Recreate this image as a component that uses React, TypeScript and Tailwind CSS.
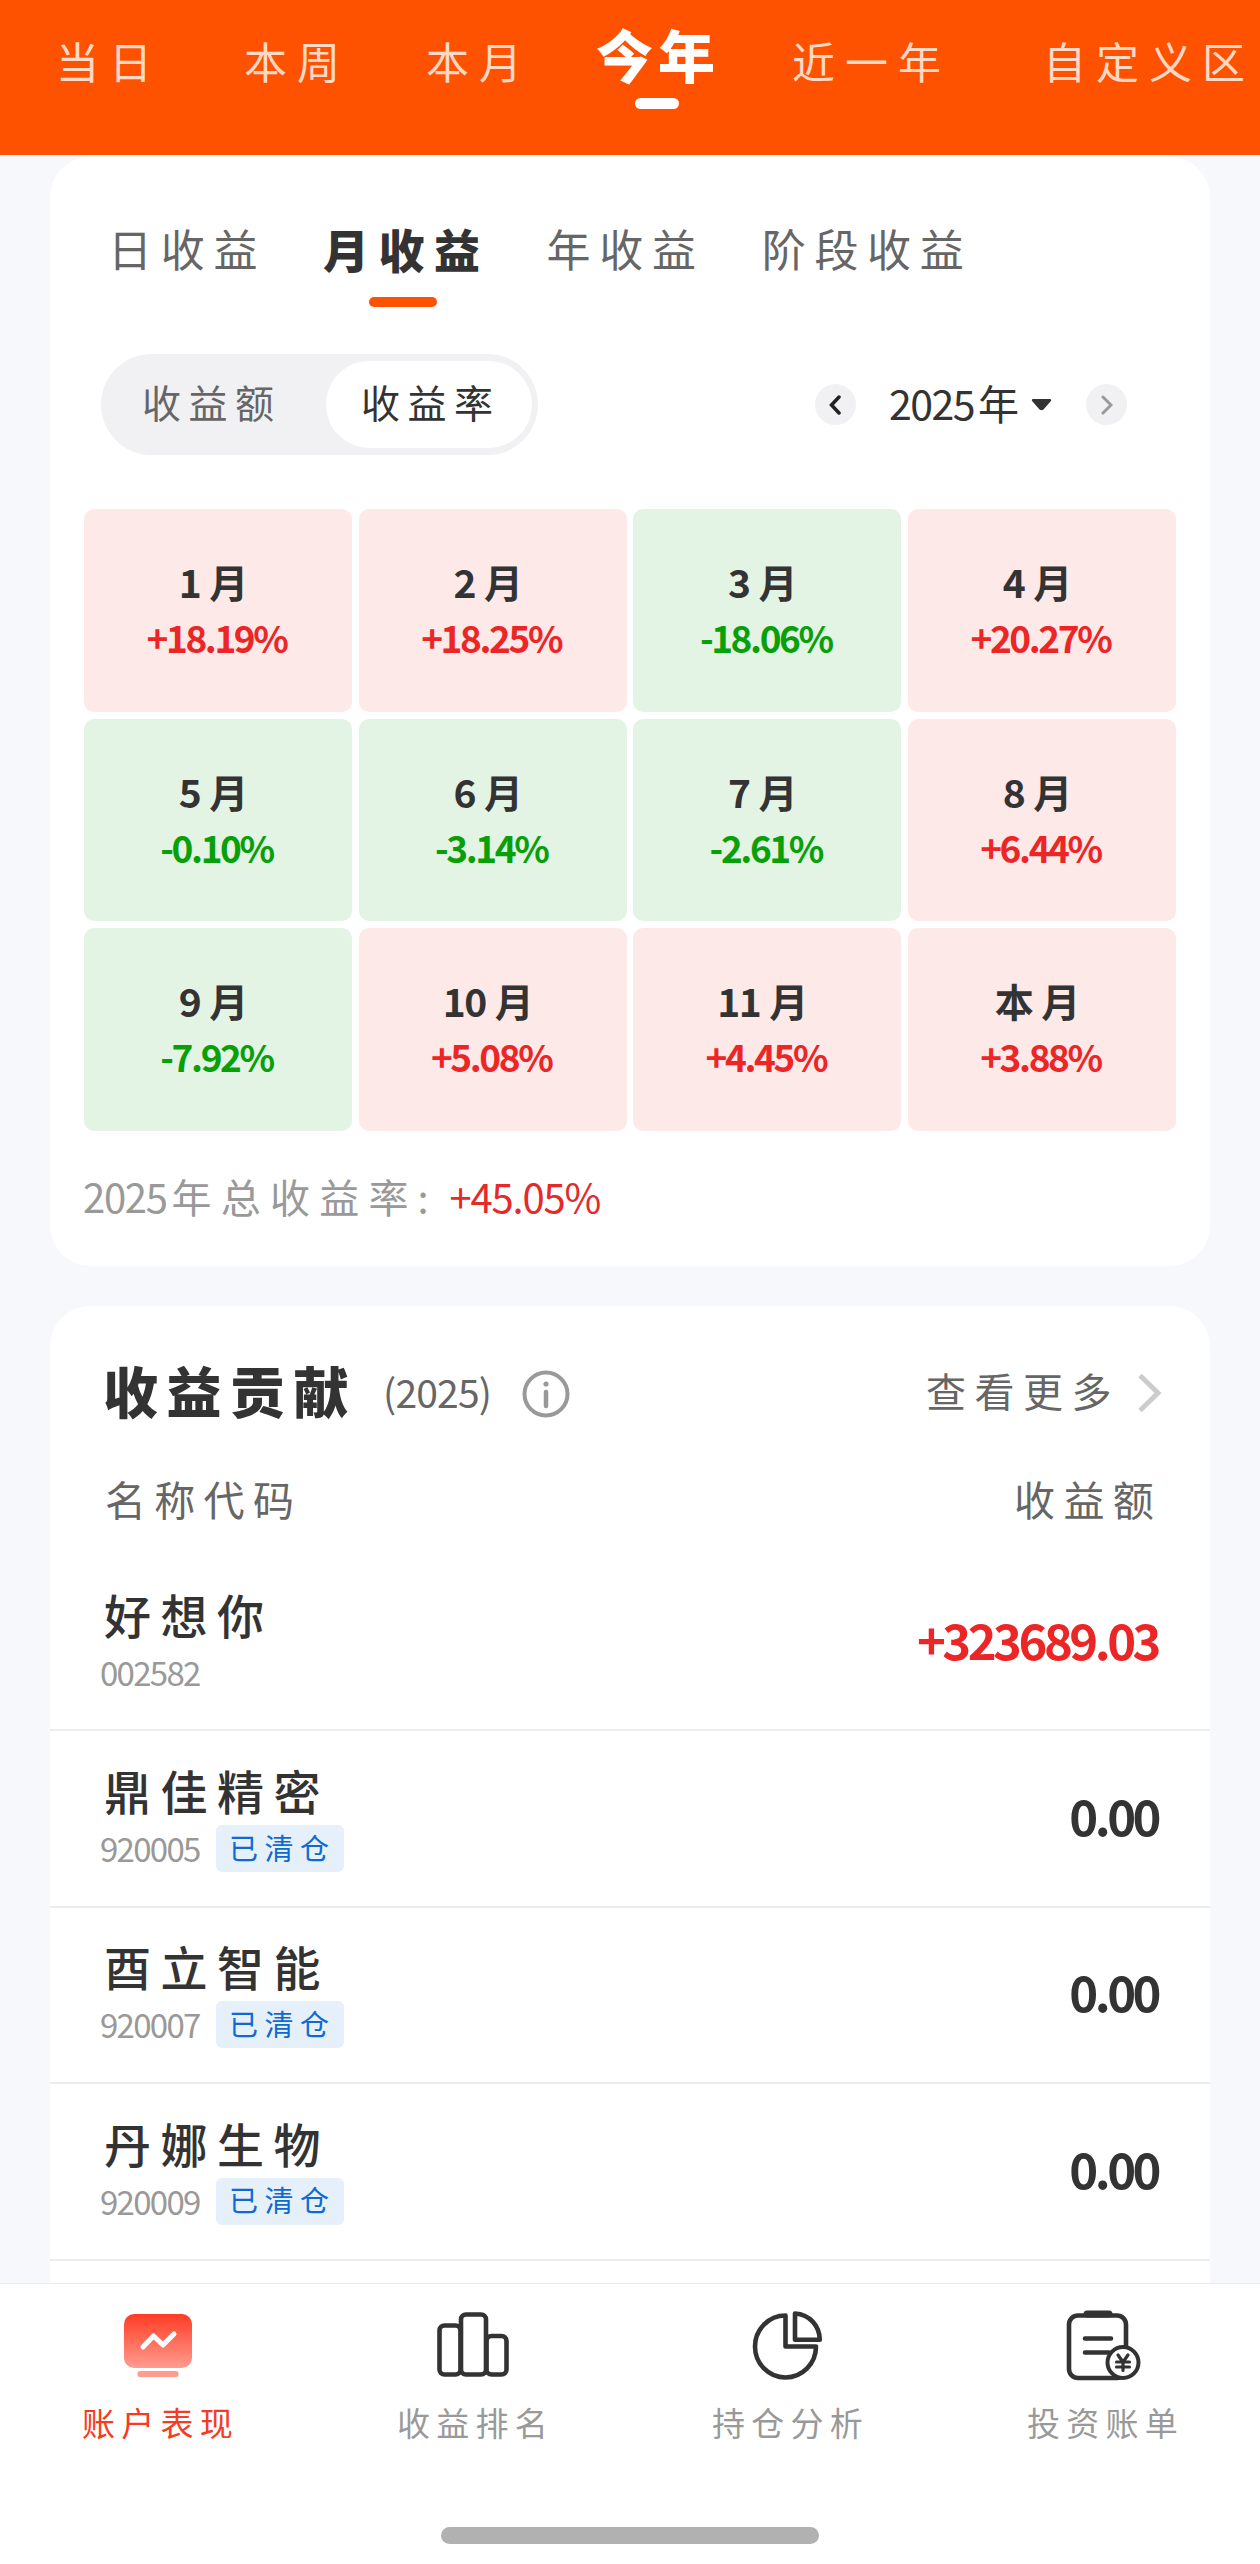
import { useState, type ReactNode } from "react";

type Holding = {
  name: string;
  code: string;
  amount: string;
  cleared?: boolean;
};

const ranges = [
  { label: "当日", className: "ml-[56px]" },
  { label: "本周", className: "ml-[82px]" },
  { label: "本月", className: "ml-[76px]" },
  { label: "今年", className: "ml-[64px]" },
  { label: "近一年", className: "ml-[72px]" },
  { label: "自定义区", className: "ml-[92px]" },
];

const periods = [
  { label: "日收益", className: "ml-[58px]" },
  { label: "月收益", className: "ml-[57px]" },
  { label: "年收益", className: "ml-[57px]" },
  { label: "阶段收益", className: "ml-[57px]" },
];

const months = [
  { label: "1", value: "+18.19%" },
  { label: "2", value: "+18.25%" },
  { label: "3", value: "-18.06%" },
  { label: "4", value: "+20.27%" },
  { label: "5", value: "-0.10%" },
  { label: "6", value: "-3.14%" },
  { label: "7", value: "-2.61%" },
  { label: "8", value: "+6.44%" },
  { label: "9", value: "-7.92%" },
  { label: "10", value: "+5.08%" },
  { label: "11", value: "+4.45%" },
  { label: "本", value: "+3.88%" },
];

const holdings: Holding[] = [
  { name: "好想你", code: "002582", amount: "+323689.03" },
  { name: "鼎佳精密", code: "920005", amount: "0.00", cleared: true },
  { name: "酉立智能", code: "920007", amount: "0.00", cleared: true },
  { name: "丹娜生物", code: "920009", amount: "0.00", cleared: true },
];

const App = () => {
  const [range, setRange] = useState("今年");
  const [period, setPeriod] = useState("月收益");

  return (
    <div className="flex h-[2564px] w-[1260px] flex-col overflow-hidden bg-[#f6f8fb] font-['Noto_Sans_CJK_SC',sans-serif] text-[#333]">
      <header className="h-[155px] shrink-0 overflow-hidden bg-[#ff5200]">
        <nav className="flex h-[120px] w-max items-center">
          {ranges.map((r) => (
            <RangeTab
              key={r.label}
              label={r.label}
              className={r.className}
              active={r.label === range}
              onClick={() => setRange(r.label)}
            />
          ))}
        </nav>
      </header>

      <main className="flex min-h-0 flex-1 flex-col overflow-hidden px-[50px] pt-[2px]">
        <section className="h-[1109px] shrink-0 rounded-[40px] bg-white">
          <div className="flex h-[197px] items-start pt-[66px]">
            {periods.map((p) => (
              <PeriodTab
                key={p.label}
                label={p.label}
                className={p.className}
                active={p.label === period}
                onClick={() => setPeriod(p.label)}
              />
            ))}
          </div>

          <div className="flex h-[101px] items-center justify-between pr-[83px] pl-[51px]">
            <div className="flex h-full w-[437px] items-center rounded-full bg-[#f1f1f4] pr-[6px] text-[39px] leading-none tracking-[7.5px]">
              <button className="w-[225px] pb-[6px] pl-[41px] text-left text-[#666]">
                收益额
              </button>
              <button className="h-[87px] flex-1 rounded-full bg-white pb-[6px] pl-[35px] text-left">
                收益率
              </button>
            </div>
            <YearPicker />
          </div>

          <div className="mt-[54px] grid grid-cols-4 gap-x-[6.6px] gap-y-[7px] px-[34px]">
            {months.map((m) => (
              <MonthCell key={m.label} label={m.label} value={m.value} />
            ))}
          </div>

          <div className="flex h-[131px] items-center pl-[33px] text-[40px] leading-none text-[#999]">
            <span className="tracking-[-1.3px]">2025</span>
            <span className="ml-[5px] w-[278px] tracking-[9.2px]">
              年总收益率:
            </span>
            <span className="tracking-[-1.2px] text-[#e52a2a]">+45.05%</span>
          </div>
        </section>

        <section className="mt-[40px] h-[1100px] shrink-0 rounded-t-[40px] bg-white">
          <div className="flex h-[170px] items-center pr-[48px] pl-[53px] leading-none">
            <h2 className="pb-[3px] text-[55px] font-black tracking-[8.5px]">
              收益贡献
            </h2>
            <span className="ml-[26px] text-[39px] tracking-[-0.8px] text-[#666]">
              (2025)
            </span>
            <InfoIcon />
            <a className="ml-auto flex items-center text-[40px] tracking-[8.5px] text-[#666]">
              <span className="pb-[2px]">查看更多</span>
              <svg
                className="mt-[4px] ml-[18px] h-[40px] w-[24px]"
                viewBox="0 0 24 40"
                fill="none"
                stroke="#ccc"
                strokeWidth="5"
              >
                <path d="M2 2.5 20 20 2 37.5" />
              </svg>
            </a>
          </div>

          <div className="flex h-[45px] items-center justify-between pr-[48px] pl-[55px] text-[41px] leading-none tracking-[8.3px] text-[#666]">
            <span>名称代码</span>
            <span>收益额</span>
          </div>

          <ul className="pt-[34px]">
            {holdings.map((h) => (
              <HoldingRow key={h.code} holding={h} />
            ))}
          </ul>
        </section>
      </main>

      <footer className="flex h-[281px] shrink-0 flex-col items-center border-t border-[#e8ecef] bg-white">
        <div className="grid w-full grid-cols-4 pt-[24px]">
          <NavItem label="账户表现" icon={<AccountIcon />} active />
          <NavItem label="收益排名" icon={<RankIcon />} />
          <NavItem label="持仓分析" icon={<PieIcon />} />
          <NavItem label="投资账单" icon={<BillIcon />} />
        </div>
        <div className="mt-auto mb-[20px] h-[17px] w-[378px] rounded-full bg-[#b1b1b1]" />
      </footer>
    </div>
  );
};

type TabProps = {
  label: string;
  className: string;
  active: boolean;
  onClick: () => void;
};

const RangeTab = ({ label, className, active, onClick }: TabProps) => (
  <button
    className={`relative leading-none whitespace-nowrap ${className} ${
      active
        ? "pb-[14px] text-[57px] font-black tracking-[5px] text-white"
        : "text-[43px] tracking-[10px] text-[#ffd9c6]"
    }`}
    onClick={onClick}
  >
    {label}
    {active && (
      <span className="absolute -bottom-[13px] left-[39px] h-[11px] w-[44px] rounded-full bg-white" />
    )}
  </button>
);

const PeriodTab = ({ label, className, active, onClick }: TabProps) => (
  <button
    className={`flex flex-col items-center leading-[50px] ${className} ${
      active
        ? "text-[46px] font-black tracking-[9.5px]"
        : "text-[44px] tracking-[8.7px] text-[#666]"
    }`}
    onClick={onClick}
  >
    {label}
    {active && (
      <span className="mt-[24px] mr-[6px] h-[10px] w-[68px] rounded-full bg-[#ff5200]" />
    )}
  </button>
);

const YearPicker = () => (
  <div className="flex items-center">
    <button className="flex size-[41px] items-center justify-center rounded-full bg-[#f1f1f4]">
      <svg
        className="h-[20px] w-[12px]"
        viewBox="0 0 12 20"
        fill="none"
        stroke="#222"
        strokeWidth="3.5"
        strokeLinecap="round"
      >
        <path d="M10 2 2.5 10 10 18" />
      </svg>
    </button>
    <button className="ml-[33px] flex items-center pb-[4px] text-[41px] leading-none">
      <span className="tracking-[-1.5px]">2025</span>
      <span className="ml-[4px]">年</span>
      <svg className="mt-[5px] ml-[12px] h-[12px] w-[21px]" viewBox="0 0 20 12">
        <path d="M1 0h18q1.5 1 0 2.5L12 10.5q-2 1.5-4 0L1 2.5Q-.5 1 1 0z" fill="#333" />
      </svg>
    </button>
    <button className="ml-[34px] flex size-[41px] items-center justify-center rounded-full bg-[#f1f1f4]">
      <svg
        className="h-[20px] w-[12px]"
        viewBox="0 0 12 20"
        fill="none"
        stroke="#999"
        strokeWidth="3"
        strokeLinecap="round"
      >
        <path d="M2 2 10 10 2 18" />
      </svg>
    </button>
  </div>
);

const MonthCell = ({ label, value }: { label: string; value: string }) => {
  const up = value.startsWith("+");

  return (
    <div
      className={`flex h-[202.6px] flex-col items-center gap-[18px] rounded-[10px] pt-[53px] font-bold ${
        up ? "bg-[#fde9e8]" : "bg-[#e3f4e5]"
      }`}
    >
      <div className="mr-[9px] flex items-center gap-[9px] text-[39px] leading-none">
        <span className="tracking-[-1.5px]">{label}</span>
        <span>月</span>
      </div>
      <div
        className={`mr-[3px] text-[37px] leading-none tracking-[-2.4px] ${
          up ? "text-[#ec2626]" : "text-[#089f08]"
        }`}
      >
        {value}
      </div>
    </div>
  );
};

const HoldingRow = ({ holding }: { holding: Holding }) => (
  <li className="flex h-[176.4px] items-center justify-between border-b-2 border-[#ededed] pr-[52px] pl-[50px]">
    <div>
      <div className="h-[59px] pl-[4px] text-[47px] leading-[50px] font-medium tracking-[9.5px]">
        {holding.name}
      </div>
      <div className="mt-[1px] flex h-[47px] items-center">
        <span className="w-[116px] text-[33px] leading-none tracking-[-1.7px] text-[#999]">
          {holding.code}
        </span>
        {holding.cleared && (
          <span className="flex h-[47px] w-[128px] items-center rounded-[6px] bg-[#e5f0fb] pb-[3px] pl-[13px] text-[29px] leading-none tracking-[6.5px] text-[#1069d0]">
            已清仓
          </span>
        )}
      </div>
    </div>
    <span
      className={`pb-[8px] text-[49px] leading-none font-bold tracking-[-3.5px] ${
        holding.amount.startsWith("+") ? "text-[#ec2626]" : ""
      }`}
    >
      {holding.amount}
    </span>
  </li>
);

const NavItem = ({
  label,
  icon,
  active = false,
}: {
  label: string;
  icon: ReactNode;
  active?: boolean;
}) => (
  <button className="flex flex-col items-center">
    {icon}
    <span
      className={`mt-[18px] pl-[6px] text-[33px] leading-[40px] tracking-[6.3px] ${
        active ? "text-[#f93a22]" : "text-[#999]"
      }`}
    >
      {label}
    </span>
  </button>
);

const InfoIcon = () => (
  <svg className="mt-[5px] ml-[31px] size-[48px]" viewBox="0 0 48 48" fill="none">
    <circle cx="24" cy="24" r="21.5" stroke="#999" strokeWidth="4" />
    <circle cx="24" cy="14" r="2.6" fill="#999" />
    <path d="M24 22v14" stroke="#999" strokeWidth="4.5" strokeLinecap="round" />
  </svg>
);

const AccountIcon = () => (
  <svg className="h-[76px] w-[76px]" viewBox="0 0 76 76" fill="none">
    <defs>
      <linearGradient id="account" x1="0" y1="0" x2="0" y2="1">
        <stop offset="0" stopColor="#ff3c24" />
        <stop offset="1" stopColor="#ff9c90" />
      </linearGradient>
    </defs>
    <rect x="4" y="6" width="68" height="54" rx="10" fill="url(#account)" />
    <path
      d="m23 39 10.5-11 9.5 9 11-11"
      stroke="#fff"
      strokeWidth="5"
      strokeLinecap="round"
      strokeLinejoin="round"
    />
    <rect x="17.5" y="63" width="41" height="6" rx="2.5" fill="#ff9c8e" />
  </svg>
);

const RankIcon = () => (
  <svg
    className="h-[76px] w-[76px]"
    viewBox="0 0 76 76"
    fill="none"
    stroke="#333"
    strokeWidth="4.6"
  >
    <rect x="4.5" y="17.5" width="21" height="49" rx="5" />
    <rect x="26" y="6.5" width="25" height="60" rx="5" />
    <rect x="51.5" y="28" width="20" height="38.5" rx="5" />
  </svg>
);

const PieIcon = () => (
  <svg
    className="h-[76px] w-[76px]"
    viewBox="0 0 76 76"
    fill="none"
    stroke="#333"
    strokeWidth="4.6"
    strokeLinejoin="round"
  >
    <path d="M35.5 7.5A30.5 31 0 1 0 66 38.5H35.5Z" />
    <path d="M45 5.5v26.3h24.8C69.5 18 60 6.5 45 5.5Z" />
  </svg>
);

const BillIcon = () => (
  <svg
    className="h-[76px] w-[76px]"
    viewBox="0 0 76 76"
    fill="none"
    stroke="#333"
    strokeWidth="4.6"
    strokeLinecap="round"
    strokeLinejoin="round"
  >
    <rect x="4" y="7.5" width="57" height="62.5" rx="9" />
    <path d="M22 6h22" strokeWidth="7" />
    <path d="M20 30.5h26M20 44.5h24" />
    <circle cx="58" cy="54.5" r="15.5" fill="#fff" strokeWidth="4" />
    <path
      d="m53 47 5 7 5-7M58 54v8.5M51.5 54h13M51.5 59h13"
      strokeWidth="3.2"
    />
  </svg>
);

export default App;
